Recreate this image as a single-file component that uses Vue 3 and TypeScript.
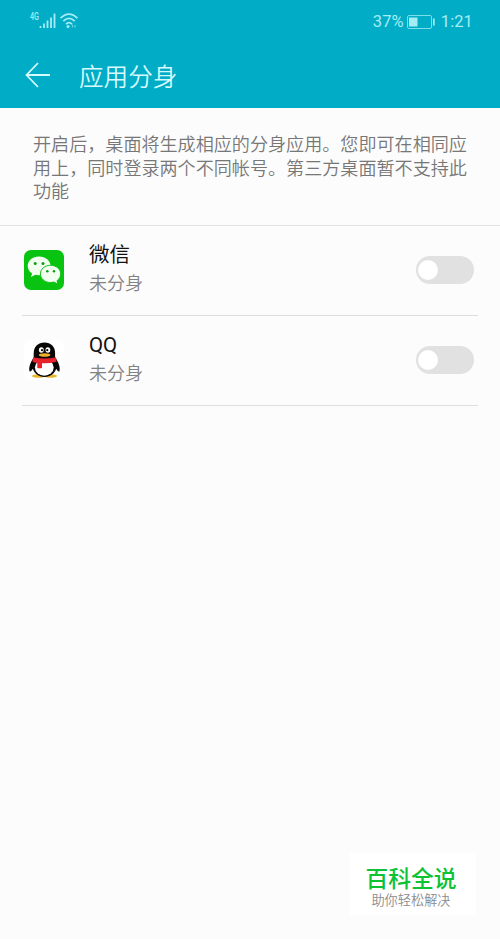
<script setup lang="ts">
import { ref } from 'vue'

interface AppEntry {
  id: 'wechat' | 'qq'
  name: string
  enabled: boolean
}

const apps = ref<AppEntry[]>([
  { id: 'wechat', name: '微信', enabled: false },
  { id: 'qq', name: 'QQ', enabled: false },
])

const descriptionLines: string[] = [
  '开启后，桌面将生成相应的分身应用。您即可在相同应',
  '用上，同时登录两个不同帐号。第三方桌面暂不支持此',
  '功能',
]
</script>

<template>
  <main class="screen">
    <header class="top">
      <div class="status">
        <div class="signals">
          <span class="net">4G</span>
          <svg class="bars" width="17" height="16" viewBox="0 0 17 16">
            <path d="M1.5 13v2M5 10.5V15M8.5 7.5V15M12 4.500V15M15.500 0.500V15" />
          </svg>
          <svg class="wifi" width="20" height="17" viewBox="0 0 20 17">
            <path d="M1.500 5.200Q10 -3 18.500 5.200M4.300 8.200Q10 2.600 15.700 8.200M7 11.200Q10 8.200 13 11.200" />
            <circle cx="9" cy="13.400" r="1.500" />
            <path class="tick" d="M13.500 11.500v3M16 12v2.500" />
          </svg>
        </div>
        <div class="power">
          <span class="percent">37%</span>
          <svg class="battery" width="30" height="14" viewBox="0 0 30 14">
            <rect class="shell" x="1.500" y="0.500" width="24" height="13" rx="1.500" />
            <rect class="charge" x="3" y="2.500" width="8.500" height="9" />
            <rect class="charge" x="27" y="3.500" width="1.700" height="7" />
          </svg>
          <span>1:21</span>
        </div>
      </div>
      <div class="bar">
        <svg class="back" width="26" height="26" viewBox="0 0 26 26">
          <path d="M13 1L1.500 13L13 25M1.500 13H25" />
        </svg>
        <h1>应用分身</h1>
      </div>
    </header>

    <section class="intro">
      <p v-for="line in descriptionLines" :key="line">{{ line }}</p>
    </section>

    <ul class="list">
      <li v-for="app in apps" :key="app.id">
        <svg v-if="app.id === 'wechat'" class="icon" viewBox="0 0 40 40">
          <rect width="40" height="40" rx="7" fill="#08c411" />
          <path fill="#f2fff0" d="M15 6.500C8.500 6.500 3.700 10.700 3.700 16c0 3.200 1.700 5.800 4.400 7.500L7 27l4.300-2.200c1.200.3 2.400.5 3.700.5 6.500 0 11.600-4.100 11.600-9.300S21.500 6.500 15 6.500Z" />
          <path fill="#f2fff0" stroke="#08c411" stroke-width="1" d="M26.500 15.300c-5.800 0-10.100 3.800-10.100 8.600s4.400 8.600 10.100 8.600c1.200 0 2.300-.2 3.400-.5l4.200 2.300-1.100-3.600c2.300-1.600 3.700-4 3.700-6.800 0-4.800-4.500-8.600-10.200-8.600Z" />
          <g fill="#119b18">
            <circle cx="11.200" cy="13.500" r="1.500" />
            <circle cx="19" cy="13.500" r="1.500" />
            <circle cx="23.300" cy="21.300" r="1.250" />
            <circle cx="30" cy="21.300" r="1.250" />
          </g>
        </svg>
        <svg v-else class="icon" viewBox="0 0 40 40">
          <rect width="40" height="40" rx="7" fill="#fff" />
          <ellipse cx="14.500" cy="36" rx="6.500" ry="1.700" fill="#e9b62e" />
          <ellipse cx="26.500" cy="36" rx="6.500" ry="1.700" fill="#e9b62e" />
          <path fill="#090606" d="M9.500 18C6.500 22 4.500 27.500 5.500 31c.5 1.500 2.200-.3 3.300-2.300C10 33 14.500 37 20.500 37S31 33 32.200 28.700c1.100 2 2.800 3.800 3.300 2.300 1-3.500-1-9-4-13Z" />
          <ellipse cx="20.300" cy="27.500" rx="9.400" ry="8.200" fill="#fff" />
          <path fill="#090606" d="M9.700 18V13.500C9.700 6.500 14 2.500 20.500 2.500s10.600 4 10.600 11V18Z" />
          <path fill="#e7222d" d="M9 17.300q11.500 2.600 23 0l.5 4.500q-6.500 1.800-14.500 1.500V28q-2.200.5-4.700 0v-5q-2.800-.5-4.800-1.200Z" />
          <ellipse cx="17.300" cy="10" rx="2.400" ry="2.800" fill="#fff" />
          <ellipse cx="23.900" cy="10" rx="2.400" ry="2.800" fill="#fff" />
          <circle cx="18" cy="10.200" r="1.100" />
          <circle cx="23.300" cy="10.200" r="1.100" />
          <ellipse cx="20.600" cy="15" rx="5.800" ry="1.800" fill="#efb12b" />
        </svg>
        <div class="label">
          <span class="name">{{ app.name }}</span>
          <span class="state">{{ app.enabled ? '已分身' : '未分身' }}</span>
        </div>
        <button
          class="toggle"
          :class="{ on: app.enabled }"
          type="button"
          role="switch"
          :aria-checked="app.enabled"
          @click="app.enabled = !app.enabled"
        >
          <span class="knob"></span>
        </button>
      </li>
    </ul>

    <footer class="brand">
      <strong>百科全说</strong>
      <span>助你轻松解决</span>
    </footer>
  </main>
</template>

<style>
body {
  background: #fcfcfc;
}
</style>

<style scoped>
.screen {
  box-sizing: border-box;
  display: flex;
  flex-direction: column;
  height: 939px;
  padding-bottom: 24px;
  background: #fcfcfc;
  font-family: Roboto, "Noto Sans CJK SC", sans-serif;
}
.top {
  height: 108px;
  background: #00acc6;
}
.status {
  display: flex;
  justify-content: space-between;
  height: 43px;
  padding: 0 27px 0 30px;
  color: #a5edf5;
}
.signals {
  display: flex;
  align-items: flex-start;
  padding-top: 13px;
}
.net {
  width: 9px;
  font-size: 10px;
  line-height: 8px;
  font-weight: 500;
  transform: scaleX(0.72);
  transform-origin: left;
}
.bars,
.wifi {
  fill: none;
  stroke: #a5edf5;
}
.bars {
  stroke-width: 1.8;
}
.wifi {
  margin-left: 3px;
  stroke-width: 1.8;
}
.wifi circle {
  fill: #a5edf5;
  stroke: none;
}
.wifi .tick {
  stroke-width: 1.2;
  opacity: 0.6;
}
.power {
  display: flex;
  align-items: center;
  font-size: 16.5px;
  letter-spacing: 0.1px;
}
.percent {
  margin-right: 2px;
}
.battery {
  margin-right: 5px;
}
.shell {
  fill: none;
  stroke: #7addea;
}
.charge {
  fill: #a5edf5;
}
.bar {
  display: flex;
  align-items: center;
  height: 65px;
  padding-left: 25px;
}
.back {
  margin-bottom: 1px;
  fill: none;
  stroke: #d5fbff;
  stroke-width: 1.8;
}
h1 {
  margin: 5px 0 0 28px;
  color: #d5fbff;
  font-size: 24.6px;
  line-height: 36px;
  font-weight: 350;
}
.intro {
  box-sizing: border-box;
  height: 118px;
  padding: 25px 0 0 33px;
  border-bottom: 1px solid #e2e2e2;
  color: #777;
  font-size: 18.080px;
  font-weight: 350;
  line-height: 23.700px;
  white-space: nowrap;
}
.intro p {
  margin: 0;
}
.list {
  margin: 0;
  padding: 0 22px;
  list-style: none;
}
li {
  box-sizing: border-box;
  display: flex;
  align-items: center;
  height: 90px;
  padding: 0 4px 1px 2px;
  border-bottom: 1px solid #dedede;
}
.icon {
  width: 40px;
  height: 40px;
}
.label {
  display: flex;
  flex: 1;
  flex-direction: column;
  margin-left: 25px;
  padding-bottom: 2px;
}
.name {
  color: #111;
  font-size: 20.500px;
  line-height: 30px;
}
.state {
  color: #828282;
  font-size: 18px;
  font-weight: 350;
  line-height: 28px;
}
.toggle {
  display: flex;
  width: 58px;
  height: 28px;
  padding: 4px 2px;
  border: 0;
  border-radius: 14px;
  background: #e1e1e1;
}
.toggle.on {
  justify-content: flex-end;
  background: #00acc6;
}
.knob {
  width: 20px;
  height: 20px;
  border-radius: 50%;
  background: #fff;
}
.brand {
  box-sizing: border-box;
  display: flex;
  flex-direction: column;
  align-items: center;
  width: 126px;
  height: 62px;
  margin: auto 24px 0 auto;
  padding: 13px 4px 0 0;
  background: #fff;
}
.brand strong {
  color: #0dc235;
  font-size: 22.800px;
  line-height: 27px;
  font-weight: 500;
}
.brand span {
  color: #8c8c8c;
  font-size: 13.200px;
  font-weight: 350;
  line-height: 16px;
}
</style>
